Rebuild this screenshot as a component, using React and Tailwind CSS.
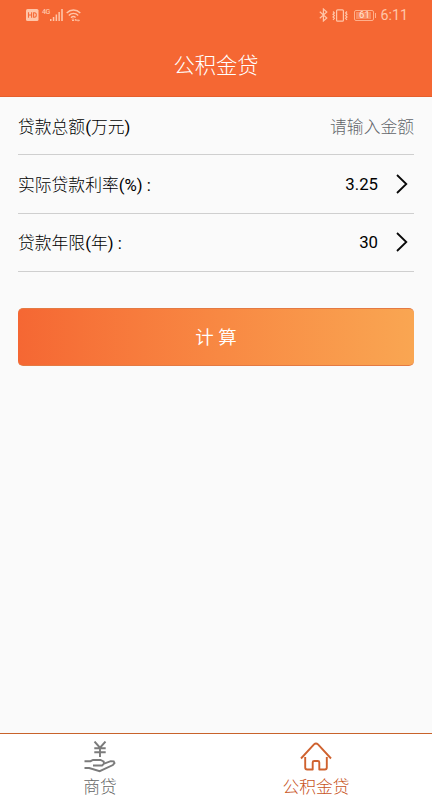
function SignalIcons() {
  return (
    <div className="flex items-start text-[#ffc5a8]">
      <svg width="13" height="12" viewBox="0 0 13 12" className="block">
        <rect x="0" y="0" width="12.5" height="12" rx="1.5" fill="currentColor" />
        <path d="M2.5 3.2v5.6M5.6 3.2v5.6M2.5 6h3.1M7.6 3.8v4.4h.9c1.1 0 1.8-.8 1.8-2.2s-.7-2.2-1.8-2.2z" fill="none" stroke="#f56a37" strokeWidth="1.1" />
      </svg>
      <span className="ml-[3px] w-[8px] text-[7px] leading-[7px] font-medium tracking-[-0.5px]">4G</span>
      <svg width="13" height="12" viewBox="0 0 13 12" className="block" fill="currentColor">
        <rect x="0" y="10" width="1.5" height="2" />
        <rect x="2.8" y="8" width="1.5" height="4" />
        <rect x="5.6" y="5.5" width="1.5" height="6.5" />
        <rect x="8.4" y="3" width="1.5" height="9" />
        <rect x="11.2" y="0" width="1.6" height="12" />
      </svg>
      <svg width="15" height="13" viewBox="0 0 15 13" className="ml-[3px] block" fill="none" stroke="currentColor" strokeWidth="1.4">
        <path d="M.7 3.9C4.5.1 10.5.1 14.3 3.9" />
        <path d="M2.8 6.4c2.7-2.7 6.7-2.7 9.4 0" />
        <path d="M5 8.7c1.4-1.4 3.2-1.4 4.6-.2" />
        <path d="M7 9.3v2.7M5.9 10.8 7 12l1.1-1.2M9 11.2h4.4M10.2 10 9 11.2M12.2 12.4l1.2-1.2" strokeWidth="1" />
      </svg>
    </div>
  );
}

function BatteryIcons() {
  return (
    <div className="flex items-center text-[#ffc5a8]">
      <svg width="9" height="14" viewBox="0 0 9 14" className="block" fill="none" stroke="currentColor" strokeWidth="1.2">
        <path d="m.8 3.8 7 6.2-3.4 3V1l3.4 3-7 6.2" />
      </svg>
      <svg width="16" height="13" viewBox="0 0 16 13" className="ml-[4px] block" fill="none" stroke="currentColor" strokeWidth="1.2">
        <rect x="4.6" y=".8" width="6.8" height="11.4" rx="1" />
        <path d="M1 2.5 2.4 4 1 5.3l1.4 1.3L1 8l1.4 1.3L1 10.8M15 2.5 13.6 4 15 5.3l-1.4 1.3L15 8l-1.4 1.3 1.4 1.5" />
      </svg>
      <div className="ml-[6px] flex h-[11px] w-[20px] items-center rounded-[2px] border border-[#ffb08c] p-px">
        <span className="flex h-full w-[15px] items-center justify-center bg-[#f98d62] pl-[2px] text-[9.5px] leading-none font-normal text-[#ffe5d8]">61</span>
      </div>
      <span className="ml-px h-[5px] w-[1.5px] bg-[#ffb08c]" />
      <span className="ml-[4px] text-[14.3px] leading-[16px] font-normal">6:11</span>
    </div>
  );
}

function Chevron() {
  return (
    <svg width="12" height="20" viewBox="0 0 12 20" className="mr-[6px] ml-[18px] block" fill="none" stroke="#080808" strokeWidth="1.8">
      <path d="m1 1 9.3 9L1 19" />
    </svg>
  );
}

function Row({ label, unit, children }) {
  return (
    <div className="flex flex-1 items-center justify-between border-b border-[#cfcfcf]">
      <span className="pt-[3px] whitespace-pre">
        {label}
        <span className="font-normal">(</span>
        {unit}
      </span>
      <div className="flex items-center">{children}</div>
    </div>
  );
}

export default function App() {
  return (
    <main className="flex h-[800px] w-[432px] flex-col overflow-hidden bg-[#fafafa] font-[Roboto,'Noto_Sans_CJK_SC',sans-serif] text-[16.8px] font-light text-black">
      <header className="flex h-[97px] flex-col border-b border-[#e55f2d] bg-[#f56733] text-white">
        <div className="flex h-[32px] items-start justify-between pr-[24px] pl-[26px]">
          <div className="pt-[9px]">
            <SignalIcons />
          </div>
          <div className="pt-[7px]">
            <BatteryIcons />
          </div>
        </div>
        <h1 className="flex h-[64px] items-center justify-center pt-[3px] text-[21.3px]">公积金贷</h1>
      </header>

      <section className="mx-[18px] flex h-[175px] flex-col">
        <Row label="贷款总额" unit={<>万元<span className="font-normal">)</span></>}>
          <span className="pt-[3px] text-[#62666b]">请输入金额</span>
        </Row>
        <Row label="实际贷款利率" unit={<span className="font-normal">%) :</span>}>
          <span className="pt-px font-normal">3.25</span>
          <Chevron />
        </Row>
        <Row label="贷款年限" unit={<>年<span className="font-normal">) :</span></>}>
          <span className="pt-px font-normal">30</span>
          <Chevron />
        </Row>
      </section>

      <button className="mx-[18px] mt-[36px] h-[58px] rounded-[5px] border-y border-[#e47a43] bg-linear-to-r from-[#f56733] to-[#f9a652] pt-[4px] text-[18.5px] font-[350] text-white">
        计 算
      </button>

      <nav className="mt-auto flex h-[67px] border-t border-[#c8622a] bg-white">
        <div className="flex w-[200px] flex-col items-center pt-[7px] text-[#666]">
          <svg width="32" height="32" viewBox="0 0 32 32" className="block" fill="none" stroke="#7b7b7b" strokeWidth="1.9">
            <path d="m10.5 .5 5.5 6.2L21.5 .5M16 7v9M10.3 7.2h11.4M10.3 11.3h11.4" />
            <path d="M.5 20.2h6l2.5-1.2h7.5l3.2 1.5v2.4l-1.6 1.6H9M19.5 22.8l7.2-2.6 3 .2.8 1.8-1.6 1.8-13.2 6.2L5.2 27H.5" />
          </svg>
          <span className="mt-[2px] text-[16.8px] leading-[24px]">商贷</span>
        </div>
        <div className="flex w-[232px] flex-col items-center pt-[7px] text-[#c8541d]">
          <svg width="32" height="32" viewBox="0 0 32 32" className="block" fill="none" stroke="#cf622f" strokeWidth="1.9" strokeLinejoin="round">
            <path d="M1 17.5 14 3.4q2-2 4 0L31 17.5" />
            <path d="M5.2 16v10.5q0 2 2 2h5.5v-7q0-1.5 1.5-1.5h3.6q1.5 0 1.5 1.5v7h5.5q2 0 2-2V16" />
          </svg>
          <span className="mt-[2px] text-[16.8px] leading-[24px]">公积金贷</span>
        </div>
      </nav>
    </main>
  );
}
